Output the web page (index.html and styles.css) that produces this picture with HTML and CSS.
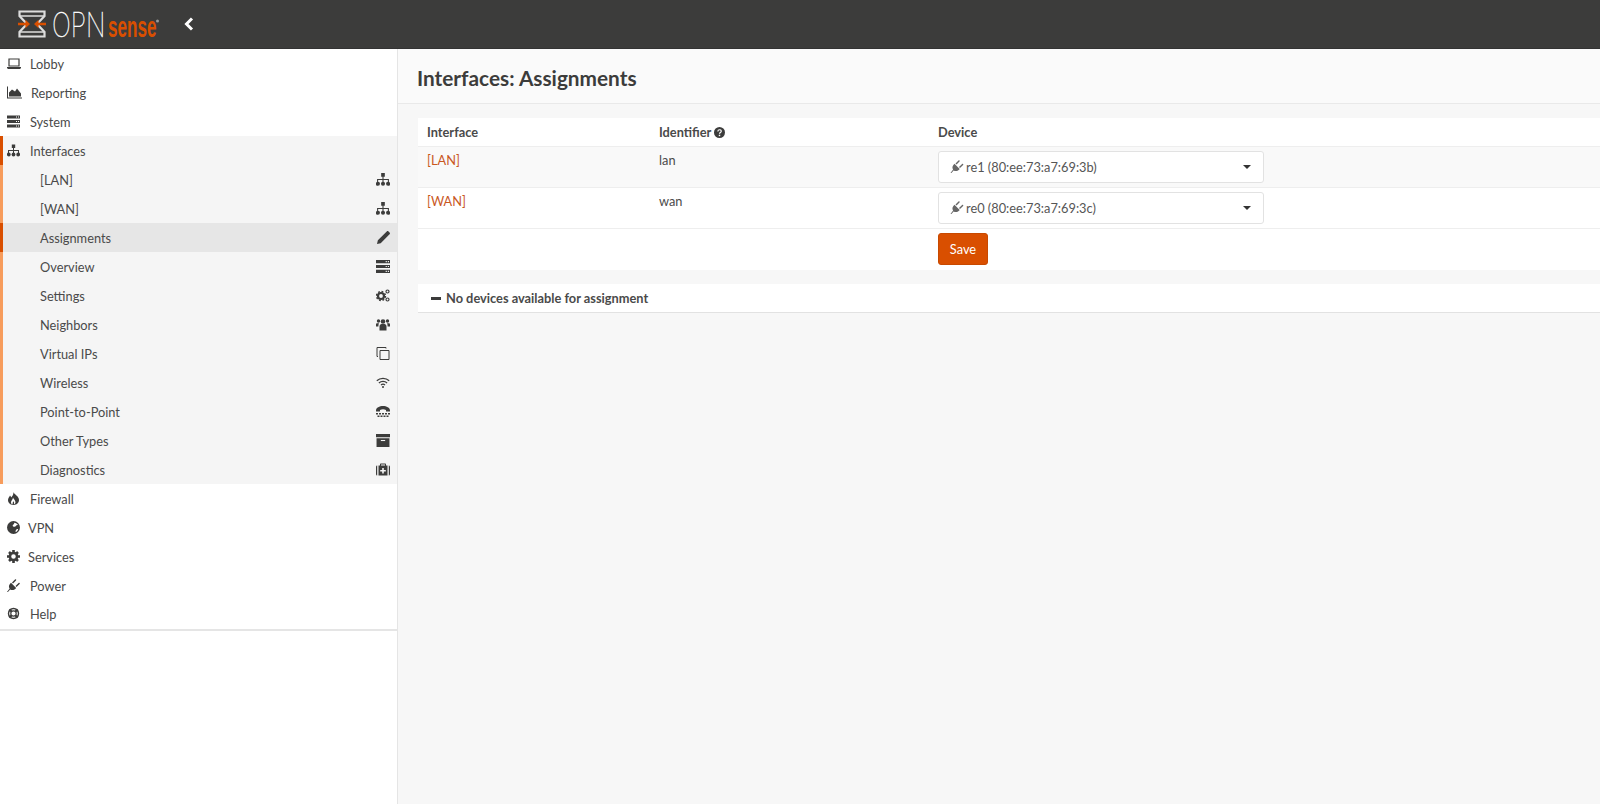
FILE: index.html
```html
<!DOCTYPE html>
<html lang="en">
<head>
    <meta charset="UTF-8">
    <title>Interfaces: Assignments</title>
    <link rel="stylesheet" href="styles.css">
</head>
<body>

<svg class="sprites" xmlns="http://www.w3.org/2000/svg">
    <symbol id="i-laptop" viewBox="0 0 14 12"><path d="M2 1.500h10v7H2z" fill="none" stroke="currentColor" stroke-width="1.200"/><path d="M0 9.500h14v1l-1 1H1l-1-1z"/></symbol>
    <symbol id="i-chart" viewBox="0 0 15 12"><path d="M0 0h1v11h14v1H0z"/><path d="M2 10V6l3-3 3 2 2-3 4 5v3z"/></symbol>
    <symbol id="i-server" viewBox="0 0 13 12"><path d="M0 0h13v3H0zM0 4.500h13v3H0zM0 9h13v3H0z"/><path d="M9 1h1v1H9zM11 1h1v1h-1zM9 5.500h1v1H9zM11 5.500h1v1h-1zM9 10h1v1H9zM11 10h1v1h-1z" fill="#fff"/></symbol>
    <symbol id="i-sitemap" viewBox="0 0 13 12"><path d="M4.800 0h3.400v3.400H4.800zM6 3.400h1v2.100h5v3h-1v-2H7v2H6v-2H2v2H1v-3h5z"/><circle cx="1.800" cy="10" r="1.900"/><circle cx="6.500" cy="10" r="1.900"/><circle cx="11.200" cy="10" r="1.900"/></symbol>
    <symbol id="i-pencil" viewBox="0 0 12 12"><path d="M0 12l.8-3.400L8.300 1.100l2.600 2.600-7.500 7.500zM9 .4c.5-.5 1.100-.5 1.600 0l1 1c.5.5.5 1.100 0 1.600l-.7.7-2.600-2.600z"/></symbol>
    <symbol id="i-cogs" viewBox="0 0 14 13"><circle cx="5" cy="7" r="3" fill="none" stroke="currentColor" stroke-width="2.200"/><circle cx="5" cy="7" r="4.500" fill="none" stroke="currentColor" stroke-width="1.400" stroke-dasharray="1.800 1.730"/><circle cx="11.500" cy="2.500" r="1.500" fill="none" stroke="currentColor" stroke-width="1.200"/><circle cx="11.500" cy="10.500" r="1.500" fill="none" stroke="currentColor" stroke-width="1.200"/></symbol>
    <symbol id="i-users" viewBox="0 0 14 12"><circle cx="7" cy="3" r="2.300"/><circle cx="2.500" cy="2.500" r="1.700"/><circle cx="11.500" cy="2.500" r="1.700"/><path d="M3.500 12V8c0-1.500 1-2.500 2-2.500h3c1 0 2 1 2 2.500v4zM0 8V6c0-.8.500-1.200 1.200-1.200h1.800c-.5 1-.6 2-.6 3.200zM14 8V6c0-.8-.5-1.200-1.200-1.200H11c.5 1 .6 2 .6 3.200z"/></symbol>
    <symbol id="i-clone" viewBox="0 0 13 13"><path d="M3.500 3.500h9v9h-9z" fill="none" stroke="currentColor"/><path d="M9.500 1.500V.5h-9v9h1" fill="none" stroke="currentColor"/></symbol>
    <symbol id="i-wifi" viewBox="0 0 14 11"><path d="M.8 3.800c3.400-3.200 9-3.200 12.400 0M2.900 5.900c2.300-2.100 5.900-2.100 8.200 0M5 8c1.100-1 2.900-1 4 0" fill="none" stroke="currentColor" stroke-width="1.300"/><circle cx="7" cy="10" r="1"/></symbol>
    <symbol id="i-tty" viewBox="0 0 14 12"><path d="M0 5c0-6 14-6 14 0v1h-4V4.500c-2-1-4-1-6 0V6H0z"/><path d="M0 7.500h2v1.500H0zM3 7.500h2v1.500H3zM6 7.500h2v1.500H6zM9 7.500h2v1.500H9zM12 7.500h2v1.500h-2zM1.500 10h2v1.500h-2zM4.500 10h2v1.500h-2zM7.500 10h2v1.500h-2zM10.500 10h2v1.500h-2z"/></symbol>
    <symbol id="i-archive" viewBox="0 0 13 12"><path d="M0 0h13v3H0zM.5 4h12v8H.5z"/><path d="M4.500 5.500h4v1h-4z" fill="#f5f5f5"/></symbol>
    <symbol id="i-medkit" viewBox="0 0 14 12"><path d="M4 2V1c0-.6.400-1 1-1h4c.6 0 1 .4 1 1v1h1.500v10h-9V2zm1 0h4V1H5zM0 3.500C0 2.700.5 2 1.200 2v10C.5 12 0 11.300 0 10.500zM14 3.500c0-.8-.5-1.500-1.200-1.500v10c.7 0 1.200-.7 1.200-1.500z"/><path d="M6.200 4.500h1.600v2h2v1.600h-2v2H6.200v-2h-2V6.500h2z" fill="#f5f5f5"/></symbol>
    <symbol id="i-fire" viewBox="0 0 12 13"><path d="M6 0c.5 2.500 5.500 4 5.500 8 0 2.800-2.300 5-5.500 5S.5 10.800.5 8C.5 6 2 5 2.500 3.500c1 1 1 1.500 1.300 2C5 4 6 2.500 6 0z"/><path d="M5.500 5.500c.6 1.800 2.500 2.800 2.500 4.800 0 1.200-.8 2.100-1.800 2.400.8-1.200.6-2.400-.4-3.400-.5.800-.8 1.800-.6 3.300C4 12.300 3.500 11.300 3.500 10.300c0-1.800 2-2.800 2-4.800z" fill="#fff"/></symbol>
    <symbol id="i-globe" viewBox="0 0 12 12"><circle cx="6" cy="6" r="6"/><path d="M6.500 1.500c1.800 0 3 1 3.700 2.300-.8-.2-1.700.1-2 .9-.4.700-1.500 1-2.500.4-.8-.5-.4-1.500.2-1.800.6-.4.900-1 .6-1.800zM9 7.500c.5-.2 1 0 1.300.3-.4 1.100-1.200 2-2.300 2.300-.3-1 .2-2.200 1-2.600z" fill="#fff"/></symbol>
    <symbol id="i-cog" viewBox="0 0 12 12"><circle cx="6" cy="6" r="3.300" fill="none" stroke="currentColor" stroke-width="2.400"/><path d="M4.800 0h2.400v2H4.800zM4.800 10h2.400v2H4.800zM0 4.800h2v2.400H0zM10 4.800h2v2.400h-2zM1 2.700L2.700 1l1.500 1.500-1.700 1.700zM9.300 1L11 2.700 9.500 4.200 7.800 2.500zM1 9.300l1.500-1.500 1.700 1.700L2.700 11zM9.500 7.800L11 9.300 9.300 11 7.800 9.500z"/></symbol>
    <symbol id="i-plug" viewBox="0 0 13 13"><path d="M0 13l2.600-3.400C1.400 7.800 2 5.800 3.300 4.500l.7-.7 5.200 5.200-.7.700c-1.300 1.300-3.300 1.900-5.400.7L.6 13.400z"/><path d="M5 3.500L8 .4c.7-.7 1.700.3 1 1L6 4.500zM8.500 7l3.100-3c.7-.7 1.700.3 1 1l-3.100 3z"/></symbol>
    <symbol id="i-help" viewBox="0 0 13 13"><circle cx="6.500" cy="6.500" r="5" fill="none" stroke="currentColor" stroke-width="1.400"/><circle cx="6.500" cy="6.500" r="2.700" fill="none" stroke="currentColor" stroke-width="1.200"/><path d="M1.500 3.200L3.200 1.500l2 2-1.700 1.700zM9.800 1.500l1.700 1.700-2 2-1.700-1.700zM1.500 9.800l2-2 1.700 1.700-2 2zM9.500 7.800l2 2-1.700 1.700-2-2z"/></symbol>
    <symbol id="i-question" viewBox="0 0 12 12"><circle cx="6" cy="6" r="6"/><path d="M4.200 4.800c0-2.400 3.700-2.400 3.700-.2 0 1.400-1.900 1.500-1.900 2.800" fill="none" stroke="#fff" stroke-width="1.300"/><path d="M5.200 8.400h1.600V10H5.200z" fill="#fff"/></symbol>
</svg>

<header class="topbar">
    <svg class="logo" width="168" height="48" viewBox="0 -9 168 48">
        <path d="M2.500 2.500h25v4.500l-7.500 8 7.500 8v4.500h-25V23l7.500-8-7.500-8z" fill="none" stroke="#ddd" stroke-width="2.200"/>
        <path d="M3 7h24M3 23h24" stroke="#ddd" stroke-width="1.600"/>
        <path d="M1 13.800h7.500v-3l4.500 4.200-4.500 4.200v-3H1zM29 13.800h-7.500v-3L17 15l4.500 4.200v-3H29z" fill="#d94f00"/>
        <text class="logo-opn" transform="translate(35 28) scale(.74 1)">OPN</text>
        <text class="logo-sense" transform="translate(91 28) scale(.59 1)">sense</text>
        <circle cx="140.500" cy="12" r="1.500" fill="#999"/>
    </svg>
    <svg class="back" width="10" height="14" viewBox="0 0 10 14"><path d="M8 1.500L2.500 7 8 12.500" fill="none" stroke="#fff" stroke-width="3"/></svg>
</header>

<div class="page">
    <nav class="sidebar">
        <a class="nav-item"><svg class="icon w14"><use href="#i-laptop"/></svg>Lobby</a>
        <a class="nav-item"><svg class="icon w15"><use href="#i-chart"/></svg>Reporting</a>
        <a class="nav-item"><svg class="icon w13"><use href="#i-server"/></svg>System</a>
        <div class="nav-group">
            <a class="nav-item nav-open"><svg class="icon w13"><use href="#i-sitemap"/></svg>Interfaces</a>
            <a class="nav-sub">[LAN]<svg class="icon w14"><use href="#i-sitemap"/></svg></a>
            <a class="nav-sub">[WAN]<svg class="icon w14"><use href="#i-sitemap"/></svg></a>
            <a class="nav-sub active">Assignments<svg class="icon w13"><use href="#i-pencil"/></svg></a>
            <a class="nav-sub">Overview<svg class="icon w14"><use href="#i-server"/></svg></a>
            <a class="nav-sub">Settings<svg class="icon w14"><use href="#i-cogs"/></svg></a>
            <a class="nav-sub">Neighbors<svg class="icon w14"><use href="#i-users"/></svg></a>
            <a class="nav-sub">Virtual IPs<svg class="icon w14"><use href="#i-clone"/></svg></a>
            <a class="nav-sub">Wireless<svg class="icon w14"><use href="#i-wifi"/></svg></a>
            <a class="nav-sub">Point-to-Point<svg class="icon w14"><use href="#i-tty"/></svg></a>
            <a class="nav-sub">Other Types<svg class="icon w14"><use href="#i-archive"/></svg></a>
            <a class="nav-sub">Diagnostics<svg class="icon w14"><use href="#i-medkit"/></svg></a>
        </div>
        <a class="nav-item"><svg class="icon w13"><use href="#i-fire"/></svg>Firewall</a>
        <a class="nav-item"><svg class="icon w12"><use href="#i-globe"/></svg>VPN</a>
        <a class="nav-item"><svg class="icon w12"><use href="#i-cog"/></svg>Services</a>
        <a class="nav-item"><svg class="icon w13"><use href="#i-plug"/></svg>Power</a>
        <a class="nav-item"><svg class="icon w13"><use href="#i-help"/></svg>Help</a>
    </nav>

    <main class="content">
        <div class="page-title"><h1>Interfaces: Assignments</h1></div>

        <section class="panel">
            <table class="assign-table">
                <thead>
                <tr>
                    <th class="col-if">Interface</th>
                    <th class="col-id">Identifier <svg class="icon help-icon"><use href="#i-question"/></svg></th>
                    <th>Device</th>
                </tr>
                </thead>
                <tbody>
                <tr class="striped">
                    <td><a class="if-link">[LAN]</a></td>
                    <td>lan</td>
                    <td>
                        <div class="select"><svg class="icon w14"><use href="#i-plug"/></svg>re1 (80:ee:73:a7:69:3b)<span class="caret"></span></div>
                    </td>
                </tr>
                <tr>
                    <td><a class="if-link">[WAN]</a></td>
                    <td>wan</td>
                    <td>
                        <div class="select"><svg class="icon w14"><use href="#i-plug"/></svg>re0 (80:ee:73:a7:69:3c)<span class="caret"></span></div>
                    </td>
                </tr>
                <tr class="save-row">
                    <td></td>
                    <td></td>
                    <td><button class="btn-save">Save</button></td>
                </tr>
                </tbody>
            </table>
        </section>

        <section class="panel notice">
            <span class="minus"></span>No devices available for assignment
        </section>
    </main>
</div>

</body>
</html>
```

FILE: styles.css
```css
* {
    box-sizing: border-box;
}
html, body {
    height: 100%;
}
body {
    margin: 0;
    display: flex;
    flex-direction: column;
    overflow: hidden;
    font-family: Lato, "Open Sans", sans-serif;
    font-size: 12.8px;
    color: #4a4a4a;
    background-color: #f7f7f7;
}
.sprites {
    display: none;
}
.topbar {
    flex: none;
    height: 49px;
    display: flex;
    align-items: center;
    padding-left: 17px;
    background-color: #3c3c3b;
    border-bottom: 1px solid #333;
}
.logo-opn {
    font-family: Inter, sans-serif;
    font-size: 34px;
    font-weight: 100;
    fill: white;
    stroke: white;
    stroke-width: 0.4px;
}
.logo-sense {
    font-family: "Liberation Sans", sans-serif;
    font-size: 29px;
    font-weight: bold;
    fill: #d94f00;
}
.back {
    margin-left: -1px;
}
.page {
    flex: 1;
    display: flex;
    min-height: 0;
}

/* menu */
.sidebar {
    flex: none;
    width: 398px;
    background-color: white;
    border-right: 1px solid #e5e5e5;
}
.nav-group {
    background-color: #f5f5f5;
    border-left: 3px solid #f79c5c;
}
.nav-item, .nav-sub {
    height: 29px;
    display: flex;
    align-items: center;
}
.nav-item {
    padding-left: 7px;
}
.nav-item .icon {
    margin-right: 9px;
}
.nav-item .w12 {
    margin-right: 8px;
}
.nav-item .w13 {
    margin-right: 10px;
}
.nav-open {
    margin-left: -3px;
    border-left: 3px solid #d94f00;
}
.nav-item.nav-open {
    padding-left: 4px;
}
.nav-sub {
    justify-content: space-between;
    padding: 0 7px 0 37px;
}
.nav-sub.active {
    margin-left: -3px;
    background-color: #e6e6e6;
    border-left: 3px solid #d94f00;
}
.sidebar > .nav-item:last-child {
    height: 31px;
    padding-bottom: 2px;
    border-bottom: 2px solid #e5e5e5;
}
.icon {
    flex: none;
    height: 13px;
    fill: #3c3c3b;
    color: #3c3c3b;
}
.w12 { width: 13px; }
.w13 { width: 13px; }
.w14 { width: 14px; }
.w15 { width: 15px; }

/* content */
.content {
    flex: 1;
    min-width: 0;
}
.page-title {
    height: 55px;
    display: flex;
    align-items: center;
    padding: 3px 0 0 19px;
    background-color: #fafafa;
    border-bottom: 1px solid #e9e9e9;
}
h1 {
    margin: 0;
    font-size: 20.8px;
    font-weight: 700;
    color: #3c3c3b;
}
.panel {
    margin: 14px 0 0 20px;
    background-color: white;
}
.assign-table {
    width: 100%;
    border-collapse: collapse;
    table-layout: fixed;
}
.col-if {
    width: 232px;
}
.col-id {
    width: 279px;
}
th, td {
    padding: 0 9px;
    text-align: left;
    vertical-align: top;
}
th {
    height: 28px;
    vertical-align: middle;
    font-weight: bold;
}
td {
    height: 41px;
    padding-top: 5px;
    border-top: 1px solid #eee;
}
tbody td:nth-child(3) {
    padding-top: 4px;
}
.save-row td {
    height: 42px;
}
.striped {
    background-color: #f9f9f9;
}
.if-link {
    color: #c9581f;
}
.help-icon {
    width: 11px;
    height: 11px;
    vertical-align: -1px;
}
.select {
    position: relative;
    width: 326px;
    height: 32px;
    display: flex;
    align-items: center;
    padding-left: 11px;
    color: #555;
    background-color: white;
    border: 1px solid #e2e2e2;
    border-radius: 3px;
}
.select .icon {
    margin-right: 2px;
    fill: #666;
}
.caret {
    position: absolute;
    right: 12px;
    top: 13px;
    border-top: 4px solid #333;
    border-left: 4px solid transparent;
    border-right: 4px solid transparent;
}
.btn-save {
    width: 50px;
    height: 32px;
    padding: 0;
    font: inherit;
    color: white;
    background-color: #d94f00;
    border: 1px solid #c84900;
    border-radius: 3px;
}
.notice {
    height: 29px;
    display: flex;
    align-items: center;
    padding-left: 13px;
    font-weight: bold;
    border-bottom: 1px solid #e2e2e2;
}
.minus {
    width: 10px;
    height: 3px;
    margin-right: 5px;
    background-color: #3c3c3b;
}
```
